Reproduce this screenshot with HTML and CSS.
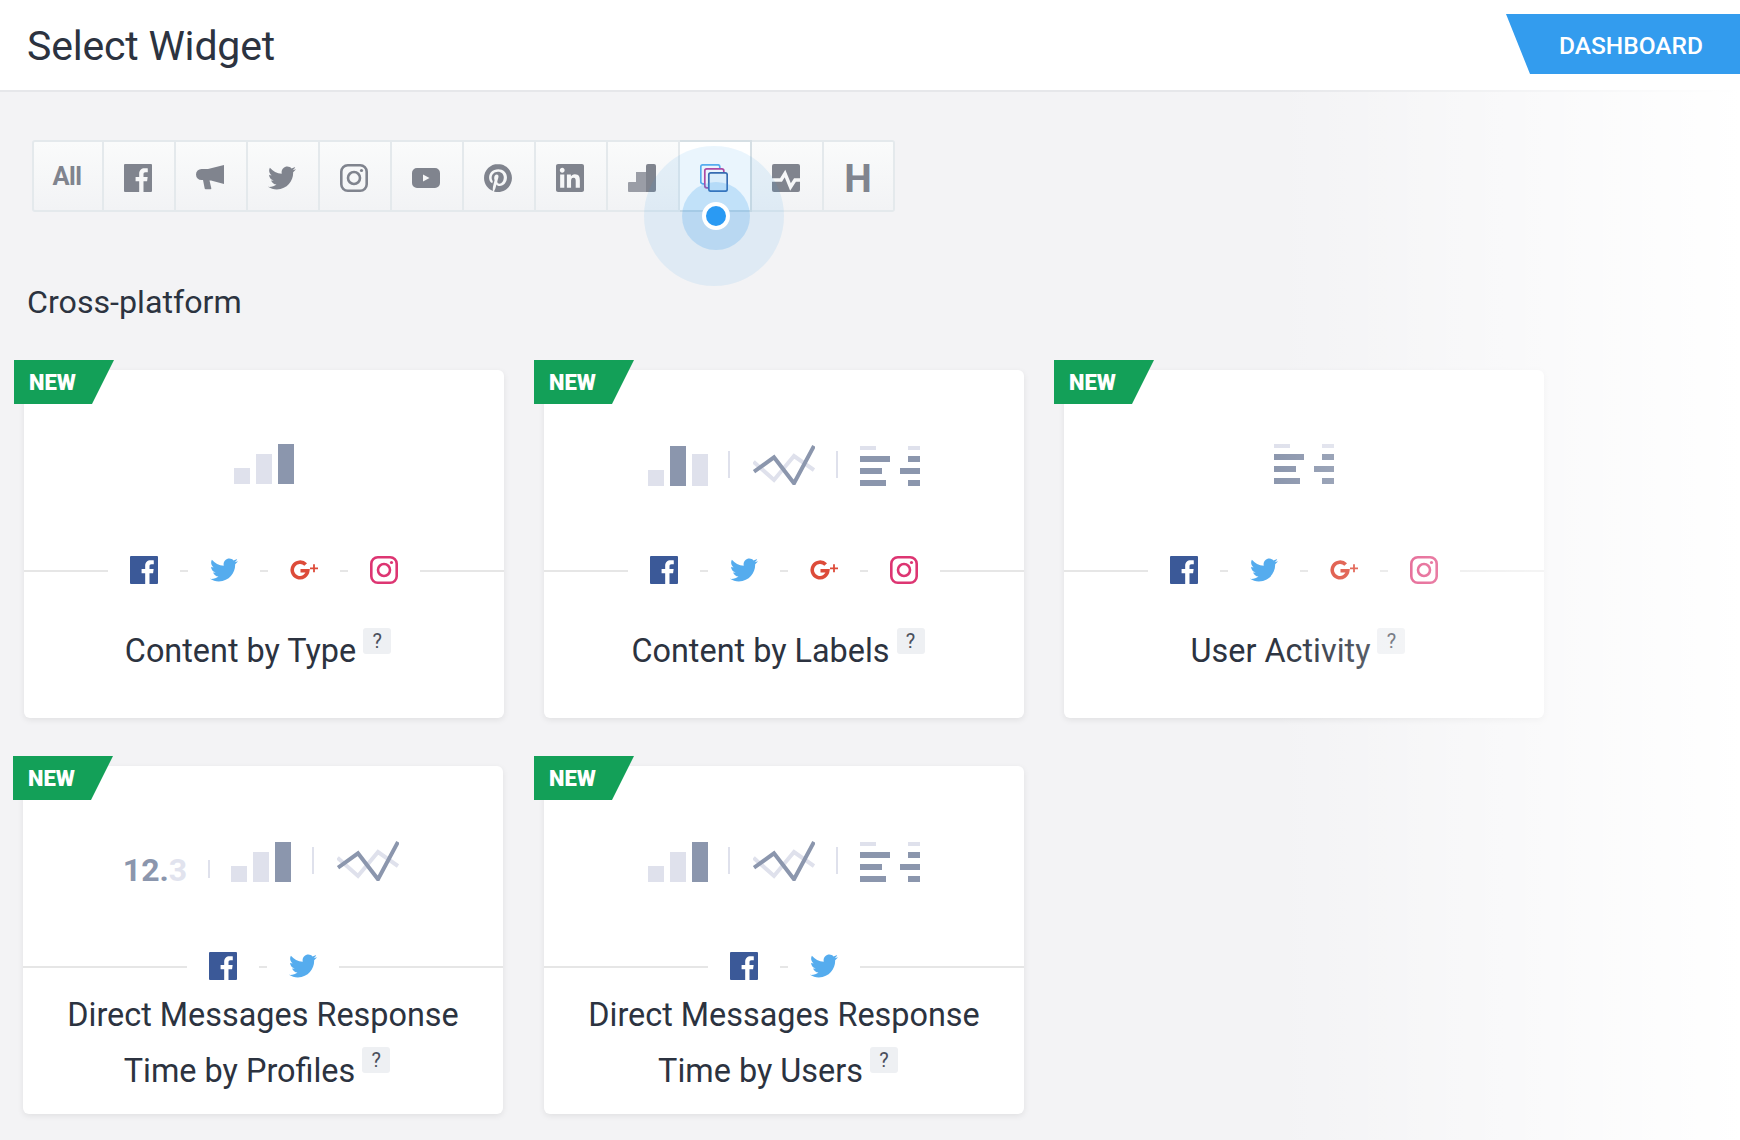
FILE: index.html
```html
<!DOCTYPE html>
<html lang="en">
<head>
  <meta charset="UTF-8">
  <meta name="viewport" content="width=device-width, initial-scale=1.0">
  <title>Select Widget</title>
  <link rel="stylesheet" href="styles.css">
</head>
<body>
  <!-- Shared icons -->
  <svg class="sprite" xmlns="http://www.w3.org/2000/svg">
    <symbol id="i-fb" viewBox="0 0 28 28">
      <path d="M1 0h26a1 1 0 0 1 1 1v26a1 1 0 0 1-1 1h-7.500V17.200h3.600l.55-4.200H19.500v-2.700c0-1.200.34-2 2.080-2h2.200V4.500c-.38-.05-1.700-.16-3.200-.16-3.200 0-5.400 1.950-5.400 5.500V13h-3.600v4.200h3.600V28H1a1 1 0 0 1-1-1V1a1 1 0 0 1 1-1z"/>
    </symbol>
    <symbol id="i-tw" viewBox="0 0 24 24">
      <path d="M23.954 4.569c-.885.389-1.830.654-2.825.775 1.014-.611 1.794-1.574 2.163-2.723-.951.555-2.005.959-3.127 1.184-.896-.959-2.173-1.559-3.591-1.559-2.717 0-4.920 2.203-4.920 4.917 0 .39.045.765.127 1.124C7.691 8.094 4.066 6.130 1.640 3.161c-.427.722-.666 1.561-.666 2.475 0 1.710.87 3.213 2.188 4.096-.807-.026-1.566-.248-2.228-.616v.061c0 2.385 1.693 4.374 3.946 4.827-.413.111-.849.171-1.296.171-.314 0-.615-.03-.916-.086.631 1.953 2.445 3.377 4.604 3.417-1.680 1.319-3.809 2.105-6.102 2.105-.39 0-.779-.023-1.170-.067 2.189 1.394 4.768 2.209 7.557 2.209 9.054 0 13.999-7.496 13.999-13.986 0-.209 0-.42-.015-.63.961-.689 1.800-1.560 2.460-2.548l-.047-.02z"/>
    </symbol>
    <symbol id="i-ig" viewBox="0 0 28 28">
      <rect x="1.300" y="1.300" width="25.400" height="25.400" rx="6.500" fill="none" stroke="currentColor" stroke-width="2.600"/>
      <circle cx="14" cy="14" r="6" fill="none" stroke="currentColor" stroke-width="2.600"/>
      <circle cx="21.500" cy="6.500" r="1.600" fill="currentColor"/>
    </symbol>
    <symbol id="i-gp" viewBox="0 0 28 28">
      <path d="M15.700 8.600A7.800 7.800 0 1 0 17.800 14.700H10.500" fill="none" stroke="currentColor" stroke-width="3.600"/>
      <path d="M20 12.300h8M24 8.300v8" fill="none" stroke="currentColor" stroke-width="1.800"/>
    </symbol>
    <symbol id="i-bars" viewBox="0 0 60 40">
      <rect class="lt" x="0" y="24" width="16" height="16"/>
      <rect class="lt" x="22" y="10" width="16" height="30"/>
      <rect class="dk" x="44" y="0" width="16" height="40"/>
    </symbol>
    <symbol id="i-bars2" viewBox="0 0 60 40">
      <rect class="lt" x="0" y="24" width="16" height="16"/>
      <rect class="dk" x="22" y="0" width="16" height="40"/>
      <rect class="lt" x="44" y="8" width="16" height="32"/>
    </symbol>
    <symbol id="i-line" viewBox="0 0 62 40">
      <polyline class="lt-line" points="0.500,16.700 21,35 41,11 61,25"/>
      <polyline class="dk-line" points="1,26.700 21,12.300 41,38.300 61,1"/>
    </symbol>
    <symbol id="i-table" viewBox="0 0 60 40">
      <rect class="lt" x="0" y="0" width="16" height="4"/>
      <rect class="dk" x="0" y="10" width="30" height="6"/>
      <rect class="dk" x="0" y="22" width="22" height="6"/>
      <rect class="dk" x="0" y="34" width="26" height="6"/>
      <rect class="lt" x="48" y="0" width="12" height="4"/>
      <rect class="dk" x="48" y="10" width="12" height="6"/>
      <rect class="dk" x="40" y="22" width="20" height="6"/>
      <rect class="dk" x="48" y="34" width="12" height="6"/>
    </symbol>
  </svg>

  <header class="topbar">
    <h1>Select Widget</h1>
    <a class="dashboard-btn">DASHBOARD</a>
  </header>

  <main class="content">
    <div class="toolbar">
      <div class="tool tool-all">All</div>
      <div class="tool"><svg class="tool-icon"><use href="#i-fb"/></svg></div>
      <div class="tool">
        <svg class="tool-icon" viewBox="0 0 28 28"><path d="M28 1v19L15 16.500H13.500l1.800 7.700a.8.8 0 0 1-.8 1H9.700a1 1 0 0 1-1-.8L7 16H5.500a5.500 5.500 0 0 1 0-11H12z"/></svg>
      </div>
      <div class="tool"><svg class="tool-icon"><use href="#i-tw"/></svg></div>
      <div class="tool"><svg class="tool-icon"><use href="#i-ig"/></svg></div>
      <div class="tool">
        <svg class="tool-icon" viewBox="0 0 28 28"><path fill-rule="evenodd" d="M5 4h18a5 5 0 0 1 5 5v10a5 5 0 0 1-5 5H5a5 5 0 0 1-5-5V9a5 5 0 0 1 5-5zM11 10.500v7l6.500-3.500z"/></svg>
      </div>
      <div class="tool">
        <svg class="tool-icon" viewBox="0 0 24 24"><path d="M12.017 0C5.396 0 .029 5.367.029 11.987c0 5.079 3.158 9.417 7.618 11.162-.105-.949-.199-2.403.041-3.439.219-.937 1.406-5.957 1.406-5.957s-.359-.72-.359-1.781c0-1.663.967-2.911 2.168-2.911 1.024 0 1.518.769 1.518 1.688 0 1.029-.653 2.567-.992 3.992-.285 1.193.6 2.165 1.775 2.165 2.128 0 3.768-2.245 3.768-5.487 0-2.861-2.063-4.869-5.008-4.869-3.41 0-5.409 2.562-5.409 5.199 0 1.033.394 2.143.889 2.741.099.12.112.225.085.345-.09.375-.293 1.199-.334 1.363-.053.225-.172.271-.401.165-1.495-.69-2.433-2.878-2.433-4.646 0-3.776 2.748-7.252 7.920-7.252 4.158 0 7.392 2.967 7.392 6.923 0 4.135-2.607 7.462-6.233 7.462-1.214 0-2.354-.629-2.758-1.379l-.749 2.848c-.269 1.045-1.004 2.352-1.498 3.146 1.123.345 2.306.535 3.550.535 6.607 0 11.985-5.365 11.985-11.987C23.970 5.390 18.592.026 11.985.026L12.017 0z"/></svg>
      </div>
      <div class="tool">
        <svg class="tool-icon" viewBox="0 0 24 24"><path d="M20.447 20.452h-3.554v-5.569c0-1.328-.027-3.037-1.852-3.037-1.853 0-2.136 1.445-2.136 2.939v5.667H9.351V9h3.414v1.561h.046c.477-.9 1.637-1.850 3.370-1.850 3.601 0 4.267 2.370 4.267 5.455v6.286zM5.337 7.433c-1.144 0-2.063-.926-2.063-2.065 0-1.138.92-2.063 2.063-2.063 1.140 0 2.064.925 2.064 2.063 0 1.139-.925 2.065-2.064 2.065zm1.782 13.019H3.555V9h3.564v11.452zM22.225 0H1.771C.792 0 0 .774 0 1.729v20.542C0 23.227.792 24 1.771 24h20.451C23.200 24 24 23.227 24 22.271V1.729C24 .774 23.200 0 22.222 0h.003z"/></svg>
      </div>
      <div class="tool">
        <svg class="tool-icon" viewBox="0 0 28 28">
          <path class="stair" d="M1 18h7V8h10v20H1a1 1 0 0 1-1-1v-8a1 1 0 0 1 1-1z"/>
          <path d="M20 0h6a2 2 0 0 1 2 2v24a2 2 0 0 1-2 2h-8V2a2 2 0 0 1 2-2z"/>
        </svg>
      </div>
      <div class="tool tool-active">
        <svg class="tool-icon" viewBox="0 0 28 28">
          <rect class="layer layer-a" x="0.800" y="0.800" width="19" height="19" rx="2"/>
          <rect class="layer layer-b" x="4.800" y="4.800" width="19" height="19" rx="2"/>
          <rect class="layer layer-c" x="8.800" y="8.800" width="18.400" height="18.400" rx="2"/>
        </svg>
        <div class="hotspot"><span class="hotspot-mid"></span><span class="hotspot-dot"></span></div>
      </div>
      <div class="tool">
        <svg class="tool-icon" viewBox="0 0 28 28">
          <rect width="28" height="28" rx="2"/>
          <polyline class="pulse" points="0,16 9,16 13,9.500 18.500,23 23,16 28,16"/>
        </svg>
      </div>
      <div class="tool tool-h">H</div>
    </div>

    <h2 class="section-title">Cross-platform</h2>

    <div class="widgets">
      <div class="card">
        <span class="badge-new">NEW</span>
        <div class="chart">
          <svg class="ic-bars up"><use href="#i-bars"/></svg>
        </div>
        <div class="social">
          <span class="rule"></span>
          <svg class="ic fb"><use href="#i-fb"/></svg><span class="dash"></span>
          <svg class="ic tw"><use href="#i-tw"/></svg><span class="dash"></span>
          <svg class="ic gp"><use href="#i-gp"/></svg><span class="dash"></span>
          <svg class="ic ig"><use href="#i-ig"/></svg>
          <span class="rule"></span>
        </div>
        <div class="card-title">Content by Type<span class="help">?</span></div>
      </div>

      <div class="card">
        <span class="badge-new">NEW</span>
        <div class="chart">
          <svg class="ic-bars"><use href="#i-bars2"/></svg>
          <span class="sep"></span>
          <svg class="ic-line"><use href="#i-line"/></svg>
          <span class="sep"></span>
          <svg class="ic-table"><use href="#i-table"/></svg>
        </div>
        <div class="social">
          <span class="rule"></span>
          <svg class="ic fb"><use href="#i-fb"/></svg><span class="dash"></span>
          <svg class="ic tw"><use href="#i-tw"/></svg><span class="dash"></span>
          <svg class="ic gp"><use href="#i-gp"/></svg><span class="dash"></span>
          <svg class="ic ig"><use href="#i-ig"/></svg>
          <span class="rule"></span>
        </div>
        <div class="card-title">Content by Labels<span class="help">?</span></div>
      </div>

      <div class="card">
        <span class="badge-new">NEW</span>
        <div class="chart">
          <svg class="ic-table up"><use href="#i-table"/></svg>
        </div>
        <div class="social">
          <span class="rule"></span>
          <svg class="ic fb"><use href="#i-fb"/></svg><span class="dash"></span>
          <svg class="ic tw"><use href="#i-tw"/></svg><span class="dash"></span>
          <svg class="ic gp"><use href="#i-gp"/></svg><span class="dash"></span>
          <svg class="ic ig"><use href="#i-ig"/></svg>
          <span class="rule"></span>
        </div>
        <div class="card-title">User Activity<span class="help">?</span></div>
      </div>

      <div class="card card-nudge">
        <span class="badge-new">NEW</span>
        <div class="chart chart-metric">
          <span class="metric">12.<em>3</em></span>
          <span class="sep sep-short"></span>
          <svg class="ic-bars"><use href="#i-bars"/></svg>
          <span class="sep sep-wide"></span>
          <svg class="ic-line"><use href="#i-line"/></svg>
        </div>
        <div class="social">
          <span class="rule"></span>
          <svg class="ic fb"><use href="#i-fb"/></svg><span class="dash"></span>
          <svg class="ic tw"><use href="#i-tw"/></svg>
          <span class="rule"></span>
        </div>
        <div class="card-title two-line">Direct Messages Response<br>Time by Profiles<span class="help">?</span></div>
      </div>

      <div class="card">
        <span class="badge-new">NEW</span>
        <div class="chart">
          <svg class="ic-bars"><use href="#i-bars"/></svg>
          <span class="sep"></span>
          <svg class="ic-line"><use href="#i-line"/></svg>
          <span class="sep"></span>
          <svg class="ic-table"><use href="#i-table"/></svg>
        </div>
        <div class="social">
          <span class="rule"></span>
          <svg class="ic fb"><use href="#i-fb"/></svg><span class="dash"></span>
          <svg class="ic tw"><use href="#i-tw"/></svg>
          <span class="rule"></span>
        </div>
        <div class="card-title two-line">Direct Messages Response<br>Time by Users<span class="help">?</span></div>
      </div>
    </div>
  </main>

  <!-- White fade over the right edge of the page -->
  <div class="edge-fade"></div>
</body>
</html>
```

FILE: styles.css
```css
html, body {
  margin: 0;
  padding: 0;
}
body {
  position: relative;
  height: 1140px;
  overflow: hidden;
  font-family: Roboto, sans-serif;
  color: #2c3340;
  background-color: #f3f3f5;
}
.sprite {
  display: none;
}
.topbar {
  display: flex;
  justify-content: space-between;
  height: 90px;
  background-color: #fff;
  border-bottom: 2px solid #e6e7ea;
}
.topbar h1 {
  margin: 0 0 0 27px;
  font-size: 41px;
  font-weight: 400;
  letter-spacing: -0.2px;
  line-height: 93px;
}
.dashboard-btn {
  position: relative;
  z-index: 3;
  width: 234px;
  height: 60px;
  margin-top: 14px;
  padding-left: 53px;
  box-sizing: border-box;
  font-size: 24.500px;
  font-weight: 500;
  line-height: 64px;
  color: #fff;
  background-color: #339cee;
  clip-path: polygon(0 0, 100% 0, 100% 100%, 24px 100%);
}
.content {
  padding: 48px 0 0 24px;
}

/* Filter toolbar */
.toolbar {
  display: inline-flex;
  margin-left: 8px;
  vertical-align: top;
}
.tool {
  position: relative;
  display: flex;
  align-items: center;
  justify-content: center;
  width: 72px;
  height: 72px;
  box-sizing: border-box;
  padding-top: 4px;
  border: 2px solid #e4e9ec;
  border-left: 0;
  background: linear-gradient(#fafbfb, #f2f3f5);
  color: #80848e;
}
.tool-all {
  padding: 0 2px 0 0;
  border-left: 2px solid #e4e9ec;
  border-radius: 3px 0 0 3px;
  font-size: 25.500px;
  font-weight: 700;
  letter-spacing: -0.5px;
}
.tool-h {
  width: 71px;
  padding: 6px 1px 0 0;
  border-radius: 0 3px 3px 0;
  font-size: 39px;
  font-weight: 700;
}
.tool-icon {
  width: 28px;
  height: 28px;
  margin-right: 2px;
  fill: currentColor;
}
.stair {
  fill: #9a9da6;
}
.pulse {
  fill: none;
  stroke: #f6f7f8;
  stroke-width: 3.400;
}
.tool-active {
  background: #fff;
  border-color: #d6dfe4;
}
.layer {
  stroke-width: 1.700;
}
.layer-a {
  fill: #fff;
  stroke: #5aaef0;
}
.layer-b {
  fill: #fff;
  stroke: #b9409c;
}
.layer-c {
  fill: #eef6fd;
  stroke: #3766ab;
}

.hotspot {
  position: absolute;
  z-index: 2;
  left: 50%;
  top: 74px;
  width: 140px;
  height: 140px;
  margin: -70px 0 0 -71px;
  border-radius: 50%;
  background-color: rgba(52, 153, 238, 0.1);
}
.hotspot-mid {
  position: absolute;
  left: 38px;
  top: 36px;
  width: 68px;
  height: 68px;
  border-radius: 50%;
  background-color: rgba(52, 153, 238, 0.22);
}
.hotspot-dot {
  position: absolute;
  left: 58px;
  top: 56px;
  width: 20px;
  height: 20px;
  border: 4px solid #fff;
  border-radius: 50%;
  background-color: #2a9af3;
}

.section-title {
  margin: 66px 0 44px 3px;
  font-size: 32.200px;
  font-weight: 400;
  line-height: 48px;
}

/* Widget cards */
.widgets {
  display: grid;
  grid-template-columns: repeat(3, 480px);
  gap: 48px 40px;
}
.card {
  position: relative;
  display: flex;
  flex-direction: column;
  height: 348px;
  box-sizing: border-box;
  padding-top: 76px;
  border-radius: 6px;
  background-color: #fff;
  box-shadow: 0 2px 6px rgba(0, 0, 0, 0.08);
}
.card-nudge {
  margin: 0 1px 0 -1px;
}
.badge-new {
  position: absolute;
  left: -10px;
  top: -10px;
  width: 100px;
  height: 44px;
  box-sizing: border-box;
  padding-left: 15px;
  font-size: 22px;
  font-weight: 900;
  line-height: 46px;
  color: #fff;
  background-color: #13a058;
  clip-path: polygon(0 0, 100% 0, 78% 100%, 0 100%);
}
.chart {
  display: flex;
  align-items: flex-start;
  justify-content: center;
  height: 42px;
}
.chart-metric {
  padding-right: 3px;
}
.ic-bars, .ic-table {
  width: 60px;
  height: 40px;
}
.ic-bars.up, .ic-table.up {
  margin-top: -2px;
}
.ic-line {
  width: 62px;
  height: 40px;
  margin: -1px 1px 0 1px;
}
.lt {
  fill: #dfe1ec;
}
.dk {
  fill: #8b96ad;
}
.lt-line, .dk-line {
  fill: none;
  stroke-width: 4;
}
.lt-line {
  stroke: #dfe1ec;
}
.dk-line {
  stroke: #8b96ad;
}
.sep {
  width: 2px;
  height: 27px;
  margin: 5px 22px 0 20px;
  background-color: #dfe1ec;
}
.sep-short {
  height: 18px;
  margin: 18px 21px 0 21px;
}
.sep-wide {
  margin-left: 21px;
}
.metric {
  margin-top: 8px;
  font-size: 32px;
  font-weight: 700;
  line-height: 40px;
  color: #8b96ad;
}
.metric em {
  font-style: normal;
  color: #e1e3ee;
}
.social {
  display: flex;
  align-items: center;
  gap: 22px;
  height: 28px;
  margin-top: 68px;
}
.rule {
  flex: 1;
  height: 2px;
  margin-top: 2px;
  background-color: #e6e6e6;
}
.dash {
  width: 8px;
  height: 2px;
  margin-top: 2px;
  background-color: #e6e6e6;
}
.ic {
  width: 28px;
  height: 28px;
  fill: currentColor;
}
.fb {
  color: #3b5998;
}
.tw {
  color: #55acee;
}
.gp {
  color: #dd4b39;
}
.ig {
  color: #dd3572;
}
.card-title {
  margin-top: 39px;
  font-size: 32.400px;
  line-height: 56px;
  text-align: center;
}
.card-title.two-line {
  margin-top: 7px;
}
.help {
  display: inline-block;
  width: 28px;
  height: 26px;
  margin: 5px 12px 0 7px;
  border-radius: 3px;
  vertical-align: top;
  font-size: 20px;
  line-height: 26px;
  color: #4a4f5c;
  background-color: #eef0f3;
}
.two-line .help {
  margin-top: 4px;
}

.edge-fade {
  position: absolute;
  top: 0;
  right: 0;
  bottom: 0;
  width: 470px;
  background: linear-gradient(to right, rgba(255, 255, 255, 0), #fff);
  pointer-events: none;
}
```
